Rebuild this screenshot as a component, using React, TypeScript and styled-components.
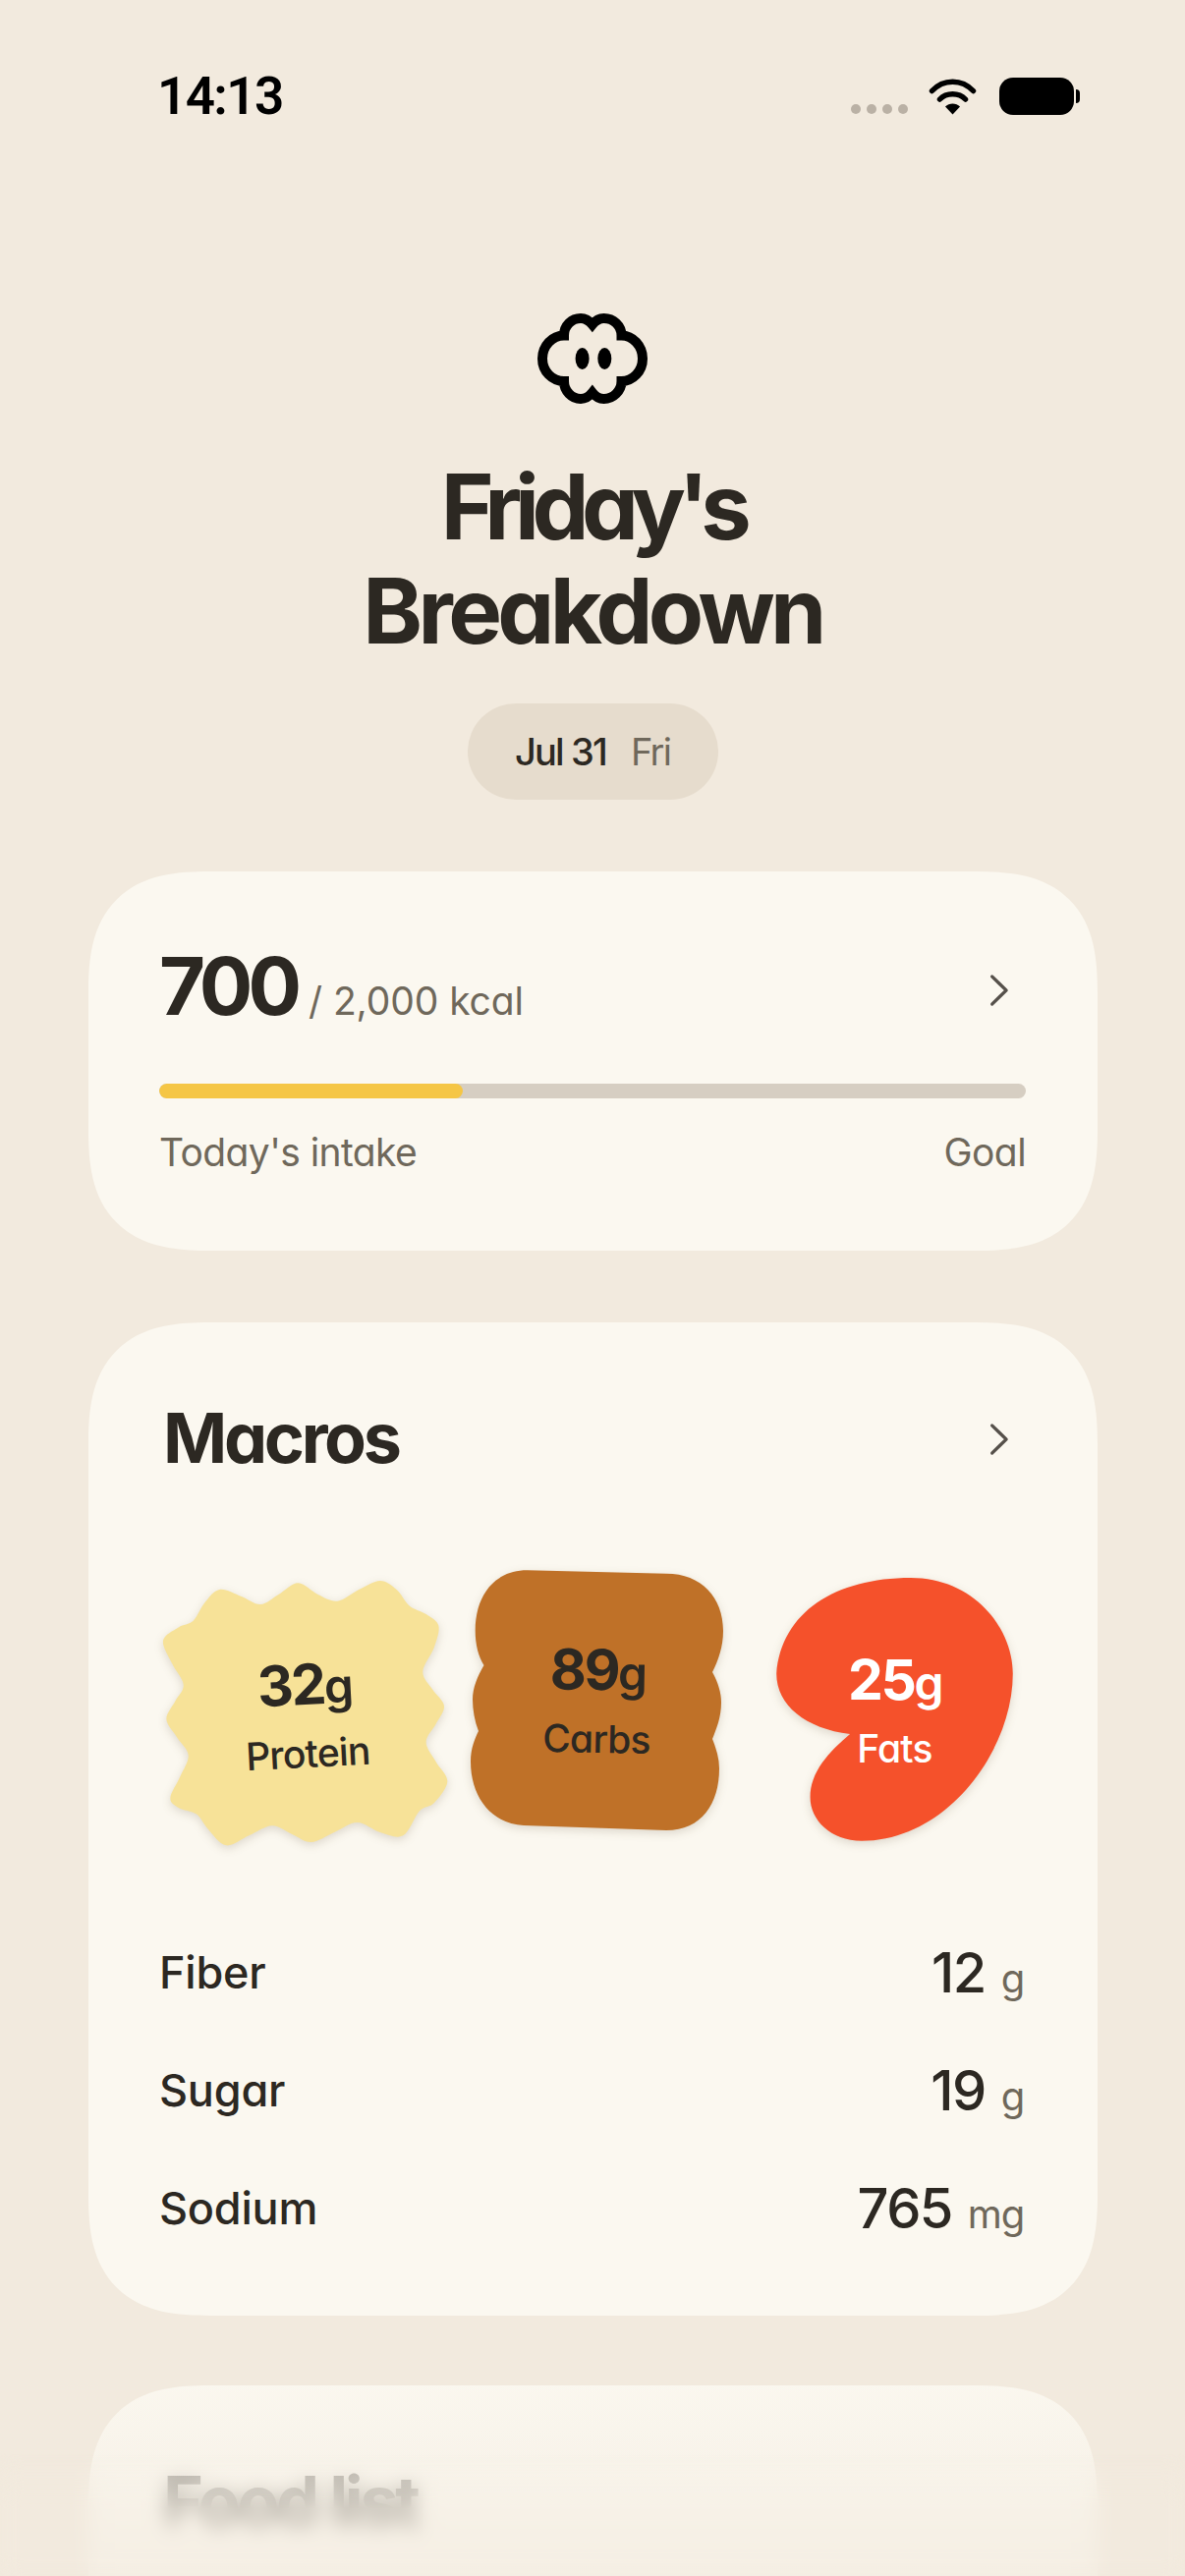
import React from "react";
import styled, { createGlobalStyle } from "styled-components";

const Global = createGlobalStyle`
  html, body { margin: 0; padding: 0; background: #f2eade; }
  * { box-sizing: border-box; }
`;

const INK = "#2c2822";
const MUTED = "#6f685b";

const Page = styled.div`
  position: relative;
  width: 1206px;
  height: 2622px;
  overflow: hidden;
  background: #f2eade;
  color: ${INK};
  font-family: Inter, "Noto Sans", sans-serif;
  font-feature-settings: "cv11" 1;
`;

const StatusBar = styled.header`
  height: 130px;
  padding: 67px 113px 0 160px;
  display: flex;
  justify-content: space-between;
  align-items: flex-start;
`;
const Time = styled.span`
  font-family: Roboto, "Liberation Sans", sans-serif;
  font-weight: 600;
  font-size: 53px;
  line-height: 62px;
  letter-spacing: -1.6px;
  color: #000;
`;
const StatusIcons = styled.div`
  display: flex;
  align-items: flex-start;
  padding-top: 12px;
`;
const Dots = styled.div`
  display: flex;
  gap: 6px;
  margin: 27px 21px 0 0;
`;
const Dot = styled.i`
  width: 10px;
  height: 10px;
  border-radius: 50%;
  background: #bab1a5;
`;
const Battery = styled.div`
  position: relative;
  width: 76px;
  height: 38px;
  margin-left: 23px;
  border-radius: 14px;
  background: #000;
  &::after {
    content: "";
    position: absolute;
    right: -6px;
    top: 12px;
    width: 4px;
    height: 14px;
    border-radius: 0 4px 4px 0;
    background: #000;
  }
`;

const Hero = styled.section`
  display: flex;
  flex-direction: column;
  align-items: center;
  padding-top: 189px;
`;
const Title = styled.h1`
  margin: 52px 0 0;
  font-size: 92px;
  line-height: 106px;
  font-weight: 700;
  text-align: center;
`;
const TitleLine = styled.span<{ $track: number }>`
  display: block;
  letter-spacing: ${(p) => p.$track}px;
`;
const DatePill = styled.div`
  margin-top: 41px;
  width: 255px;
  height: 98px;
  border-radius: 49px;
  background: #e6dccd;
  display: flex;
  align-items: center;
  justify-content: center;
  gap: 25px;
  font-size: 38px;
  letter-spacing: -1.8px;
`;
const PillDate = styled.span`
  font-weight: 500;
`;
const PillDay = styled.span`
  color: ${MUTED};
  font-weight: 400;
`;

const Card = styled.section<{ $mt: number; $h: number }>`
  margin: ${(p) => p.$mt}px 89px 0 90px;
  height: ${(p) => p.$h}px;
  padding: 0 73px 0 72px;
  border-radius: 124px;
  corner-shape: superellipse(1.4);
  background: #fbf8f0;
`;
const IntakeTop = styled.div`
  height: 216px;
  padding-top: 72px;
  display: flex;
  justify-content: space-between;
  align-items: flex-start;
`;
const Kcal = styled.div`
  display: flex;
  align-items: baseline;
  gap: 12px;
`;
const KcalValue = styled.span`
  font-size: 81px;
  line-height: 90px;
  font-weight: 700;
  letter-spacing: -5px;
`;
const KcalGoal = styled.span`
  font-size: 39px;
  font-weight: 400;
  letter-spacing: -0.1px;
  color: ${MUTED};
`;
const Chevron = styled.svg<{ $top: number }>`
  width: 22px;
  height: 34px;
  margin: ${(p) => p.$top}px 16px 0 0;
  fill: none;
  stroke: #55504a;
  stroke-width: 3.5;
  stroke-linecap: round;
  stroke-linejoin: round;
`;
const Track = styled.div`
  height: 15px;
  border-radius: 8px;
  background: #d6cec2;
  overflow: hidden;
`;
const Fill = styled.div`
  height: 100%;
  border-radius: 8px;
  background: #f5c645;
`;
const BarLabels = styled.div`
  margin-top: 30px;
  display: flex;
  justify-content: space-between;
  font-size: 39px;
  line-height: 50px;
  letter-spacing: -0.6px;
  color: ${MUTED};
`;

const MacroHead = styled.div`
  height: 148px;
  padding-top: 76px;
  display: flex;
  justify-content: space-between;
  align-items: flex-start;
`;
const MacroTitle = styled.h2`
  margin: 0 0 0 4px;
  font-size: 70px;
  line-height: 84px;
  font-weight: 700;
  letter-spacing: -3.3px;
`;
const Blobs = styled.div`
  margin-top: 104px;
  height: 290px;
  display: flex;
  align-items: flex-start;
`;
const Blob = styled.div<{ $w: number; $h: number; $top: number; $left: number; $color: string; $ink: string; $tilt: number; $pad: number }>`
  position: relative;
  flex: none;
  width: ${(p) => p.$w}px;
  height: ${(p) => p.$h}px;
  margin: ${(p) => p.$top}px 0 0 ${(p) => p.$left}px;
  padding-top: ${(p) => p.$pad}px;
  color: ${(p) => p.$ink};
  display: flex;
  flex-direction: column;
  align-items: center;
  & > svg {
    position: absolute;
    inset: 0;
    width: 100%;
    height: 100%;
    fill: ${(p) => p.$color};
    filter: drop-shadow(0 3px 5px rgba(70, 50, 20, 0.16));
  }
  & > div {
    position: relative;
    transform: rotate(${(p) => p.$tilt}deg);
    display: flex;
    flex-direction: column;
    align-items: center;
  }
`;
const BlobValue = styled.span`
  font-size: 57px;
  line-height: 70px;
  font-weight: 700;
  letter-spacing: -2.5px;
`;
const BlobUnit = styled.span`
  font-size: 48px;
  font-weight: 600;
`;
const BlobLabel = styled.span`
  margin-top: 7px;
  font-size: 39px;
  line-height: 50px;
  font-weight: 500;
  letter-spacing: -0.8px;
`;

const Rows = styled.div`
  margin-top: 90px;
  display: flex;
  flex-direction: column;
  gap: 60px;
`;
const Row = styled.div`
  height: 60px;
  display: flex;
  justify-content: space-between;
  align-items: flex-start;
`;
const RowName = styled.span`
  font-size: 45px;
  line-height: 60px;
  font-weight: 500;
  letter-spacing: -0.2px;
`;
const RowValue = styled.span`
  display: flex;
  align-items: baseline;
  gap: 16px;
  padding-right: 2px;
`;
const RowNumber = styled.span`
  font-size: 56px;
  line-height: 60px;
  font-weight: 500;
  letter-spacing: -1.6px;
`;
const RowUnit = styled.span`
  font-size: 40px;
  line-height: 60px;
  letter-spacing: -1.2px;
  color: ${MUTED};
`;

const FoodCard = styled.section`
  margin: 71px 89px 0 90px;
  height: 400px;
  padding: 76px 76px 0;
  border-radius: 124px;
  corner-shape: superellipse(1.4);
  background: #fbf8f0;
`;
const FoodTitle = styled.h2`
  margin: 0;
  font-size: 70px;
  line-height: 84px;
  font-weight: 700;
  letter-spacing: -3.3px;
  opacity: 0.57;
`;
const BottomFade = styled.div`
  position: absolute;
  left: 0;
  right: 0;
  bottom: 0;
  height: 125px;
  backdrop-filter: blur(10px);
  -webkit-backdrop-filter: blur(10px);
  mask-image: linear-gradient(to bottom, transparent 0, #000 45%);
  -webkit-mask-image: linear-gradient(to bottom, transparent 0, #000 45%);
`;
const BottomTint = styled.div`
  position: absolute;
  left: 0;
  right: 0;
  bottom: 0;
  height: 194px;
  background: linear-gradient(to bottom, rgba(242, 234, 222, 0.08) 0, rgba(242, 234, 222, 0.7) 100%);
`;

function Wave() {
  const pts: [number, number][] = [
    [250, 175], [315, 195], [375, 220], [430, 190], [490, 155], [550, 190], [610, 210], [675, 175], [740, 148], [790, 175], [830, 225], [880, 250], [918, 285], [905, 350], [870, 425], [900, 480], [935, 530], [910, 585], [880, 640], [910, 700], [945, 760], [905, 825], [860, 850], [810, 925], [740, 915], [670, 885], [600, 915], [530, 945], [470, 920], [410, 895], [340, 925], [270, 955], [215, 905], [180, 860], [125, 840], [100, 810], [130, 745], [155, 680], [120, 625], [88, 570], [115, 515], [140, 465], [105, 400], [78, 330], [125, 290], [170, 270], [205, 215],
  ];
  const n = pts.length;
  let d = `M${pts[0][0]} ${pts[0][1]}`;
  for (let i = 0; i < n; i++) {
    const [a, b, c, e] = [pts[(i - 1 + n) % n], pts[i], pts[(i + 1) % n], pts[(i + 2) % n]];
    d += `C${b[0] + (c[0] - a[0]) / 6} ${b[1] + (c[1] - a[1]) / 6} ${c[0] - (e[0] - b[0]) / 6} ${c[1] - (e[1] - b[1]) / 6} ${c[0]} ${c[1]}`;
  }
  return (
    <svg viewBox="75 145 875 815" aria-hidden="true">
      <path d={`${d}Z`} />
    </svg>
  );
}

const Arrow = ({ top }: { top: number }) => (
  <Chevron $top={top} viewBox="0 0 22 34" aria-hidden="true">
    <path d="M3 3 L19 17 L3 31" transform="translate(1 0) scale(.9 1)" />
  </Chevron>
);

export default function App() {
  return (
    <Page>
      <Global />
      <StatusBar>
        <Time>14:13</Time>
        <StatusIcons>
          <Dots>
            <Dot />
            <Dot />
            <Dot />
            <Dot />
          </Dots>
          <svg width="49" height="38" viewBox="0 0 49 38" aria-hidden="true">
            <g fill="none" stroke="#000" strokeWidth="5.5" strokeLinecap="round">
              <path d="M3.5 13.5 C15 1 34 1 45.5 13.5" />
              <path d="M11.5 22 C18 15 31 15 37.5 22" />
            </g>
            <path d="M24.5 37.5 L17 29.5 C21 25.5 28 25.5 32 29.5 Z" fill="#000" />
          </svg>
          <Battery />
        </StatusIcons>
      </StatusBar>

      <Hero>
        <svg width="112" height="92" viewBox="0 0 112 92" aria-hidden="true">
          <path
            d="M27 22.4 C27 12 35 5 44 5 C49 5 53 8 55.8 11.4 C58.5 8 63 5 67.6 5 C77 5 85.5 12 85.5 22.4 C97 22.4 107 33 107 46 C107 59 97 69 85.5 69 C85.5 79 77 87 67.6 87 C63 87 58.5 84 55.8 80.5 C53 84 49 87 44 87 C35 87 27 79 27 69 C15 69 5 59 5 46 C5 33 15 22.4 27 22.4 Z"
            fill="none"
            stroke="#000"
            strokeWidth="10"
          />
          <ellipse cx="45.6" cy="46" rx="7" ry="11" fill="#000" />
          <ellipse cx="68.3" cy="46" rx="7" ry="11" fill="#000" />
        </svg>
        <Title>
          <TitleLine $track={-7.5}>Friday's</TitleLine>
          <TitleLine $track={-4.6}>Breakdown</TitleLine>
        </Title>
        <DatePill>
          <PillDate>Jul 31</PillDate>
          <PillDay>Fri</PillDay>
        </DatePill>
      </Hero>

      <Card $mt={73} $h={386}>
        <IntakeTop>
          <Kcal>
            <KcalValue>700</KcalValue>
            <KcalGoal>/ 2,000 kcal</KcalGoal>
          </Kcal>
          <Arrow top={32} />
        </IntakeTop>
        <Track>
          <Fill style={{ width: `${(700 / 2000) * 100}%` }} />
        </Track>
        <BarLabels>
          <span>Today's intake</span>
          <span>Goal</span>
        </BarLabels>
      </Card>

      <Card $mt={73} $h={1011}>
        <MacroHead>
          <MacroTitle>Macros</MacroTitle>
          <Arrow top={26} />
        </MacroHead>
        <Blobs>
          <Blob $w={292} $h={272} $top={10} $left={3} $color="#f7e298" $ink={INK} $tilt={-3} $pad={72}>
            <Wave />
            <div>
              <BlobValue>
                32<BlobUnit>g</BlobUnit>
              </BlobValue>
              <BlobLabel>Protein</BlobLabel>
            </div>
          </Blob>
          <Blob $w={257} $h={265} $top={0} $left={22} $color="#bf7128" $ink={INK} $tilt={1} $pad={67}>
            <svg viewBox="0 0 257 265" aria-hidden="true">
              <path d="M57.5 .3 L199 3.7 C235 3.7 257 28 257 62 C257 78 252 92 246 104 C252 115 255 125 255 135 C255 150 250 162 246 172 C250 182 253 192 253 202 C253 238 235 265 199 265 L54 260 C20 258 0 230 0 195 C0 182 4 172 8 164 C4 154 2 142 2 132 C2 120 7 108 13.5 97 C8 88 4.7 76 4.7 62 C4.7 25 25 .3 57.5 .3 Z" />
            </svg>
            <div>
              <BlobValue>
                89<BlobUnit>g</BlobUnit>
              </BlobValue>
              <BlobLabel>Carbs</BlobLabel>
            </div>
          </Blob>
          <Blob $w={241} $h={268} $top={8} $left={54} $color="#f5512b" $ink="#fff" $tilt={0} $pad={69}>
            <svg viewBox="0 0 241 268.5" aria-hidden="true">
              <path d="M75 159.3 C30 154 0 130 0 97.7 C5 35 60 0 137 0 C200 0 241 50 241 97.7 C241 175 175 268 87 268.3 C55 268 34.4 247 34.4 224 C34.4 198 53 178 75 159.3 Z" />
            </svg>
            <div>
              <BlobValue>
                25<BlobUnit>g</BlobUnit>
              </BlobValue>
              <BlobLabel>Fats</BlobLabel>
            </div>
          </Blob>
        </Blobs>
        <Rows>
          <Row>
            <RowName>Fiber</RowName>
            <RowValue>
              <RowNumber>12</RowNumber>
              <RowUnit>g</RowUnit>
            </RowValue>
          </Row>
          <Row>
            <RowName>Sugar</RowName>
            <RowValue>
              <RowNumber>19</RowNumber>
              <RowUnit>g</RowUnit>
            </RowValue>
          </Row>
          <Row>
            <RowName>Sodium</RowName>
            <RowValue>
              <RowNumber>765</RowNumber>
              <RowUnit>mg</RowUnit>
            </RowValue>
          </Row>
        </Rows>
      </Card>

      <FoodCard>
        <FoodTitle>Food list</FoodTitle>
      </FoodCard>
      <BottomTint />
      <BottomFade />
    </Page>
  );
}
